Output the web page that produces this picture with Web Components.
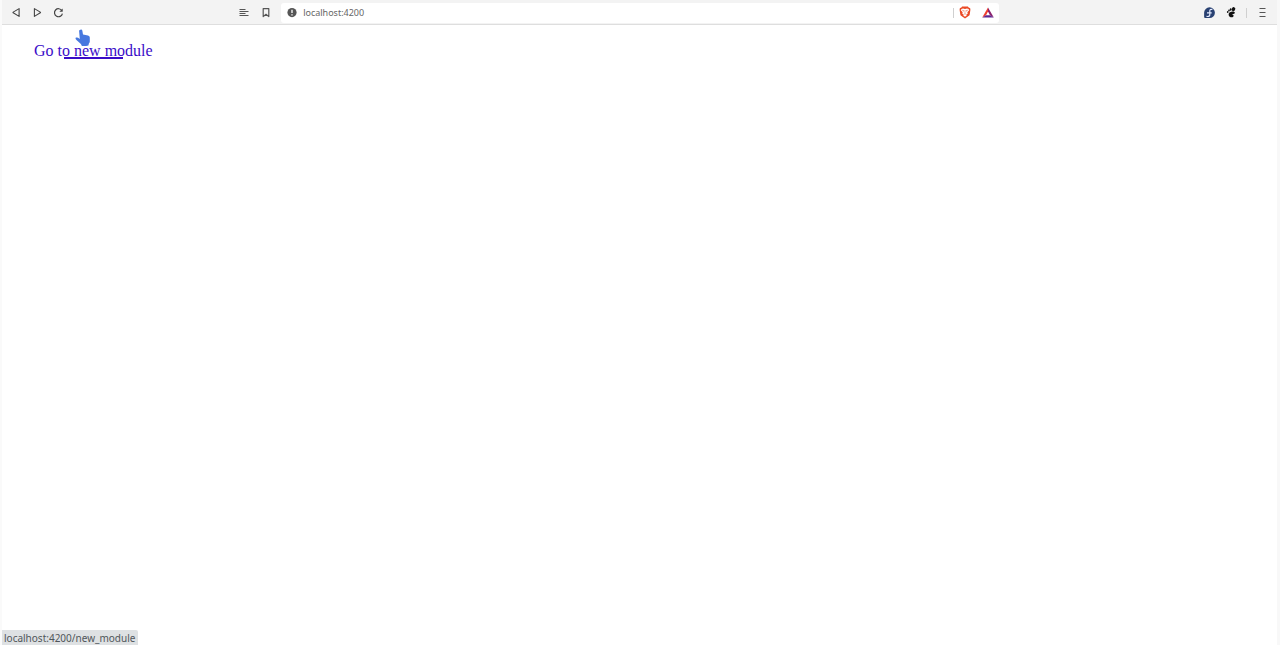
<!DOCTYPE html>
<html lang="en">
<head>
<meta charset="utf-8">
<title>localhost:4200</title>
<style>
html, body { height: 100%; margin: 0; background: #fff; }
</style>
</head>
<body>
<browser-window>
  <browser-toolbar slot="toolbar" address="localhost:4200"></browser-toolbar>
  <module-link href="#new_module">Go to new module</module-link>
  <status-bubble slot="status">localhost:4200/new_module</status-bubble>
</browser-window>
<script>
class BaseElement extends HTMLElement {
  constructor() {
    super();
    this.attachShadow({ mode: "open" }).innerHTML = this.render();
  }
}

customElements.define("browser-window", class extends BaseElement {
  render() {
    return `<style>
      :host { display: flex; flex-direction: column; min-height: 100%; position: relative; box-sizing: border-box; border-left: 2px solid #fafafa; border-right: 3px solid #f8f8f8; }
      main { flex: 1; padding: 16px 32px; }
      footer { position: absolute; left: 0; bottom: 0; }
    </style>
    <slot name="toolbar"></slot>
    <main><slot></slot></main>
    <footer><slot name="status"></slot></footer>`;
  }
});

customElements.define("browser-toolbar", class extends BaseElement {
  render() {
    return `<style>
      :host { display: block; background: #f3f3f3; border-bottom: 1px solid #dedede; font: 9px/14px "Noto Sans", sans-serif; }
      header { display: grid; grid-template-columns: 11fr minmax(300px, 762px) 13fr; height: 22px; padding-top: 2px; align-items: center; }
      div { display: flex; align-items: center; }
      .nav { gap: 7px; padding-left: 7px; }
      .center { gap: 8px; }
      .end { justify-content: flex-end; gap: 8px; padding-right: 8px; }
      button { display: block; flex: none; width: 14px; height: 14px; padding: 0; border: 0; background: none; }
      svg { display: block; width: 14px; height: 14px; flex: none; }
      form { flex: 1; min-width: 0; display: flex; align-items: center; height: 20px; margin: 0; padding: 0 4px; gap: 4px; background: #fff; border-radius: 3px; }
      .field { flex: 1; display: block; min-width: 0; height: 14px; padding: 0; border: 0; outline: 0; background: none; font: inherit; color: #666; }
      i { display: block; width: 1px; height: 10px; background: #d0d0d0; }
      .tools { gap: 9px; }
    </style>
    <header>
      <div class="nav">
        <button aria-label="Back"><svg viewBox="0 0 14 14" fill="none" stroke="#444" stroke-width="1.1" stroke-linejoin="round"><path d="M10.1 2.6v7.8L4.2 6.8q-.5-.3 0-.7z"/></svg></button>
        <button aria-label="Forward"><svg viewBox="0 0 14 14" fill="none" stroke="#444" stroke-width="1.1" stroke-linejoin="round"><path d="M4.4 2.6v7.8l5.9-3.6q.5-.3 0-.7z"/></svg></button>
        <button aria-label="Reload"><svg viewBox="0 0 14 14" fill="none" stroke="#444" stroke-width="1.2"><path d="M10.9 4.6A4 4 0 1 0 11.4 7.6"/><path d="M11.7 2.4v3.3H8.4z" fill="#444" stroke="none"/></svg></button>
      </div>
      <div class="center">
        <button aria-label="Reader view"><svg viewBox="0 0 14 14" stroke="#555" stroke-width="1"><path d="M2.5 3.5h6M2.5 5.5h9M2.5 7.5h6M2.5 9.5h9"/></svg></button>
        <button aria-label="Bookmark"><svg viewBox="0 0 14 14" fill="none" stroke="#555" stroke-width="1.2" stroke-linejoin="round"><path d="M4.2 2.6h5.6v8L7 8.3l-2.8 2.3z"/></svg></button>
        <form>
          <button type="button" aria-label="Site information"><svg viewBox="0 0 14 14"><circle cx="7" cy="6.6" r="4.6" fill="#555"/><path d="M7 3.8v3.3M7 8.2v1.2" stroke="#fff" stroke-width="1.3"/></svg></button>
          <input class="field" aria-label="Address">
          <i></i>
          <div class="tools">
            <button type="button" aria-label="Shields"><svg viewBox="0 0 14 14"><path d="M4.1.6h5.8l1 1.2 1.2.2.3 1.7-.7 4.7q-.2 1-1.2 1.7L7 12.6l-3.5-2.5q-1-.7-1.2-1.7l-.7-4.7L1.9 2l1.2-.2z" fill="#eb4a25"/><path d="m3.5 3.1 1.5-.5 2 .4 2-.4 1.5.5.7 1.2-1.8 2 .3 1.4-1.4.9.4 1L7 10.8 5.3 9.6l.4-1-1.4-.9.3-1.4-1.8-2z" fill="#fff"/><path d="m4 4.2 2 .4-.6 1M10 4.2l-2 .4.6 1M7 4.6v3M6 8h2" stroke="#eb6545" stroke-width=".5" fill="none"/></svg></button>
            <button type="button" aria-label="Rewards"><svg viewBox="0 0 14 14"><path d="M7 1.4 1.2 11.6 5 9.3l2-3.7z" fill="#ef3e2e"/><path d="M7 1.4 12.8 11.6 9 9.3 7 5.6z" fill="#8b216d"/><path d="M1.2 11.6h11.6L9 9.3H5z" fill="#5c2791"/></svg></button>
          </div>
        </form>
      </div>
      <div class="end">
        <button aria-label="Fedora"><svg viewBox="0 0 14 14"><path d="M7.5 1.3A5.4 5.4 0 1 1 7.5 12.1H3.2q-1.1 0-1.1-1.1V6.7A5.4 5.4 0 0 1 7.5 1.3z" fill="#294172"/><path d="M10.4 3.5Q7.8 2.9 7.8 5.1v3.4q0 2-2.1 2l-1.2-.2M5 6.9h4.7" fill="none" stroke="#e3eaff" stroke-width="1.2"/></svg></button>
        <button aria-label="GNOME"><svg viewBox="0 0 14 14" fill="#111"><ellipse cx="9.5" cy="3.2" rx="1.7" ry="2.1" transform="rotate(30 9.5 3.2)"/><ellipse cx="6.7" cy="3.5" rx=".9" ry="1.2"/><ellipse cx="5" cy="4.5" rx=".8" ry="1.1"/><ellipse cx="3.7" cy="6" rx=".8" ry="1"/><path d="M10.8 6.4C9.8 4.8 4.6 5.6 4.6 8.4c0 3 4.6 4.1 5 1.4.1-.9-.8-.7-1.3-1-.8-.6 3-1 2.5-2.4z"/></svg></button>
        <i></i>
        <button aria-label="Menu"><svg viewBox="0 0 14 14" stroke="#555" stroke-width="1"><path d="M4.5 2.5h6M4.5 6.5h6M4.5 10.5h6"/></svg></button>
      </div>
    </header>`;
  }
  connectedCallback() {
    this.shadowRoot.querySelector(".field").value = this.getAttribute("address");
  }
});

customElements.define("module-link", class extends BaseElement {
  render() {
    return `<style>
      :host { display: inline-block; position: relative; font: 16px/20px "Liberation Serif", serif; }
      a { position: relative; display: block; color: #3a0cc8; text-decoration: none; }
      a::after { content: ""; position: absolute; left: 25%; right: 25%; bottom: 2px; height: 2px; background: #3a0cc8; }
      svg { position: absolute; left: 40px; top: -13px; width: 18px; height: 18px; pointer-events: none; }
    </style>
    <a><slot></slot></a>
    <svg viewBox="0 0 18 18" aria-hidden="true"><path d="M6.3 1.7q1.7-.5 2 .9l.7 4 5 .8q1.8.3 1.8 2v4.2q0 1.2-.9 1.8l-.5 2q-3 1.1-6.5.6l-1-2-4.2-3.8q-2-1.8-.6-2.6 1.2-.6 3.7 1.3L5.1 3q-.1-1 1.2-1.3z" fill="#4778df"/></svg>`;
  }
  connectedCallback() {
    this.shadowRoot.querySelector("a").href = this.getAttribute("href");
  }
});

customElements.define("status-bubble", class extends BaseElement {
  render() {
    return `<style>
      :host { display: block; padding: 1px 3px 0 2px; background: #dee1e3; color: #50565a; border-top-right-radius: 2px; font: 10px/14px "Noto Sans", sans-serif; }
    </style><slot></slot>`;
  }
});
</script>
</body>
</html>
